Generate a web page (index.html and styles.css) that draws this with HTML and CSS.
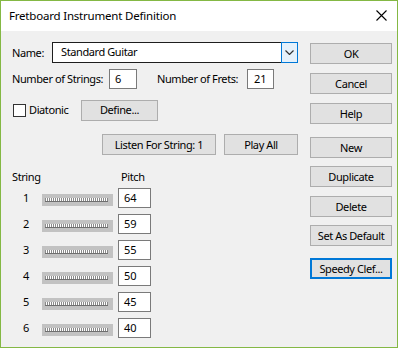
FILE: index.html
```html
<!DOCTYPE html>
<html>
<head>
<meta charset="utf-8">
<link rel="stylesheet" href="styles.css">
</head>
<body>
<div class="window">
  <div class="titlebar">
    <span class="title">Fretboard Instrument Definition</span>
    <svg class="close" width="11" height="11" viewBox="0 0 11 11"><path d="M0.5 0.5 L10.5 10.5 M10.5 0.5 L0.5 10.5" stroke="#000" stroke-width="1.1" fill="none"/></svg>
  </div>
  <div class="content">
    <div class="left">
      <div class="row name-row">
        <span class="lbl name-lbl">Name:</span>
        <div class="combo">
          <span class="combo-text">Standard Guitar</span>
          <span class="combo-btn"><svg width="9" height="5" viewBox="0 0 9 5"><path d="M0.5 0.5 L4.5 4.5 L8.5 0.5" stroke="#333" stroke-width="1.2" fill="none"/></svg></span>
        </div>
      </div>
      <div class="row count-row">
        <span class="lbl strings-lbl">Number of Strings:</span>
        <span class="field strings-field">6</span>
        <span class="lbl frets-lbl">Number of Frets:</span>
        <span class="field frets-field">21</span>
      </div>
      <div class="row diatonic-row">
        <span class="check"></span>
        <span class="lbl diatonic-lbl">Diatonic</span>
        <span class="btn define-btn">Define...</span>
      </div>
      <div class="row listen-row">
        <span class="btn listen-btn">Listen For String: 1</span>
        <span class="btn play-btn">Play All</span>
      </div>
      <div class="row header-row">
        <span class="lbl string-hdr">String</span>
        <span class="lbl pitch-hdr">Pitch</span>
      </div>
      <div class="strings">
        <div class="string-row"><span class="num">1</span><span class="slider"><span class="track"></span></span><span class="field pitch">64</span></div>
        <div class="string-row"><span class="num">2</span><span class="slider"><span class="track"></span></span><span class="field pitch">59</span></div>
        <div class="string-row"><span class="num">3</span><span class="slider"><span class="track"></span></span><span class="field pitch">55</span></div>
        <div class="string-row"><span class="num">4</span><span class="slider"><span class="track"></span></span><span class="field pitch">50</span></div>
        <div class="string-row"><span class="num">5</span><span class="slider"><span class="track"></span></span><span class="field pitch">45</span></div>
        <div class="string-row"><span class="num">6</span><span class="slider"><span class="track"></span></span><span class="field pitch">40</span></div>
      </div>
    </div>
    <div class="right">
      <span class="btn side-btn">OK</span>
      <span class="btn side-btn gap9">Cancel</span>
      <span class="btn side-btn gap9">Help</span>
      <span class="btn side-btn gap13">New</span>
      <span class="btn side-btn gap8">Duplicate</span>
      <span class="btn side-btn gap9">Delete</span>
      <span class="btn side-btn gap8">Set As Default</span>
      <span class="btn side-btn gap12 focused">Speedy Clef...</span>
    </div>
  </div>
</div>
</body>
</html>
```

FILE: styles.css
```css
* { box-sizing: border-box; }
html, body { margin: 0; padding: 0; }
body {
  font-family: "Noto Sans", "Open Sans", sans-serif;
  font-size: 11px;
  letter-spacing: -0.4px;
  color: #000;
  background: #fff;
}
.window {
  width: 398px;
  height: 348px;
  border: 1px solid #84b844;
  background: #f0f0f0;
  display: flex;
  flex-direction: column;
}
.titlebar {
  height: 30px;
  background: #fff;
  display: flex;
  align-items: center;
  padding-left: 8px;
  padding-right: 10px;
  justify-content: space-between;
}
.title { font-size: 11.5px; letter-spacing: -0.2px; line-height: 16px; margin-top: -1px; }
.close { display: block; margin-top: -1px; }

.content {
  display: flex;
  flex: 1;
  padding-left: 11px;
}
.left { width: 286px; display: flex; flex-direction: column; }
.right {
  margin-left: 12px;
  width: 82px;
  display: flex;
  flex-direction: column;
  padding-top: 12px;
}

.row { display: flex; align-items: center; }
.lbl { line-height: 16px; white-space: nowrap; }

.name-row { margin-top: 11px; height: 21px; }
.name-lbl { width: 40px; }
.combo {
  flex: 1;
  height: 21px;
  display: flex;
  background: #fff;
  border: 1px solid #1e1e1e;
  border-right: none;
}
.combo-text { flex: 1; padding-left: 8px; line-height: 18px; }
.combo-btn {
  width: 17px;
  height: 21px;
  margin-top: -1px;
  border: 1px solid #0078d7;
  background: #e5f1fb;
  display: flex;
  align-items: center;
  justify-content: center;
}

.field {
  display: block;
  height: 20px;
  background: #fff;
  border: 1px solid #7a7a7a;
  padding-left: 5px;
  line-height: 18px;
  letter-spacing: 0;
}
.count-row { margin-top: 5px; height: 21px; }
.strings-lbl { width: 97px; }
.strings-field { width: 28px; }
.frets-lbl { margin-left: 20px; width: 90px; }
.frets-field { width: 27px; padding-left: 6px; }

.diatonic-row { margin-top: 10px; height: 22px; }
.check {
  width: 13px;
  height: 13px;
  border: 1px solid #333;
  background: #fff;
  margin-right: 3px;
  margin-left: 1px;
}
.diatonic-lbl { width: 52px; }

.btn {
  display: flex;
  align-items: center;
  justify-content: center;
  height: 21px;
  background: #e1e1e1;
  border: 1px solid #adadad;
  white-space: nowrap;
  line-height: 16px;
}
.define-btn { width: 77px; }

.listen-row { margin-top: 13px; height: 21px; justify-content: flex-end; }
.listen-btn { width: 114px; }
.play-btn { width: 74px; margin-left: 8px; }

.header-row { margin-top: 14px; height: 16px; }
.string-hdr { width: 109px; }

.strings { display: flex; flex-direction: column; margin-top: 3px; gap: 6px; }
.string-row { display: flex; align-items: center; height: 20px; }
.num { width: 28px; text-align: center; line-height: 16px; }
.slider {
  width: 71px;
  height: 12px;
  margin-left: 2px;
  margin-top: 3px;
  background: #c2c2c2;
  padding: 4px 5px 0 3px;
}
.track {
  display: block;
  height: 4px;
  background:
    linear-gradient(#6e6e6e, #6e6e6e) bottom / 100% 1px no-repeat,
    repeating-linear-gradient(to right, #8a8a8a 0 1px, #fff 1px 2px);
}
.pitch { width: 33px; margin-left: 5px; }

.side-btn { width: 82px; }
.gap8 { margin-top: 8px; }
.gap9 { margin-top: 9px; }
.gap12 { margin-top: 12px; }
.gap13 { margin-top: 13px; }
.focused { border: 2px solid #0078d7; }
```
